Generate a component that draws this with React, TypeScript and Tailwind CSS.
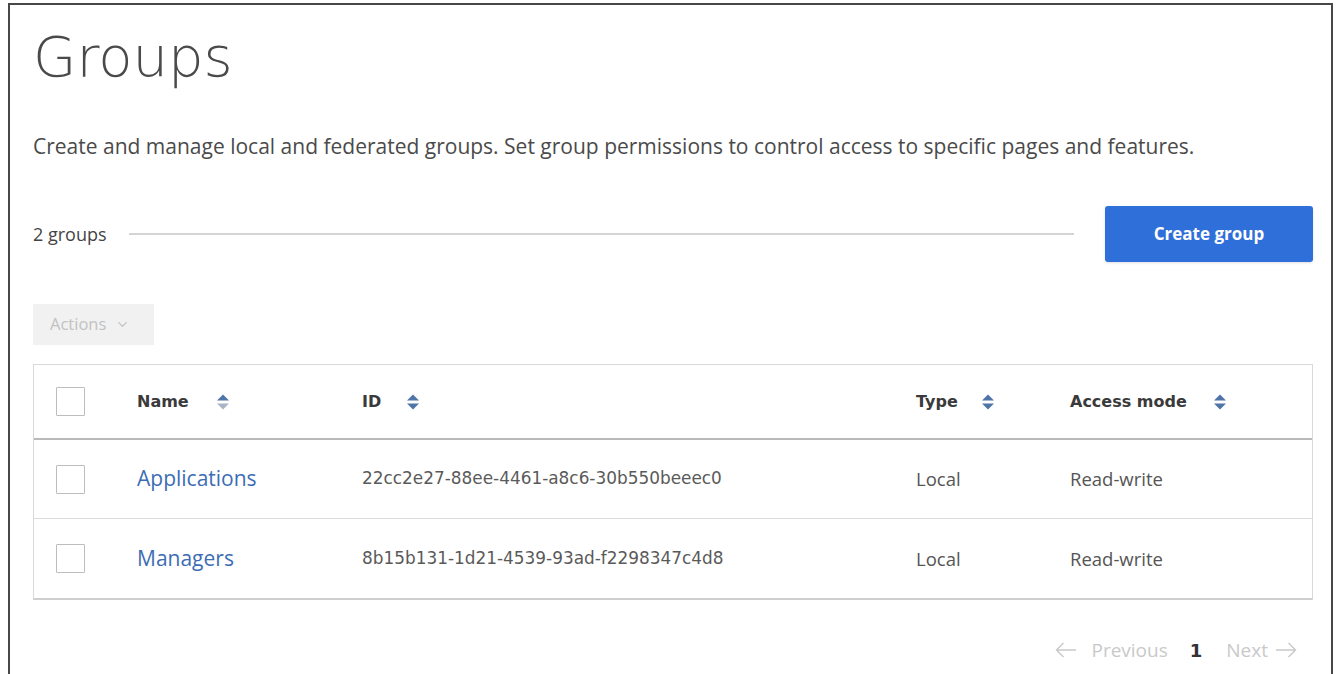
import { ChevronDown } from "lucide-react";

interface Group {
	name: string;
	id: string;
	type: string;
	access: string;
}

const groups: Group[] = [
	{ name: "Applications", id: "22cc2e27-88ee-4461-a8c6-30b550beeec0", type: "Local", access: "Read-write" },
	{ name: "Managers", id: "8b15b131-1d21-4539-93ad-f2298347c4d8", type: "Local", access: "Read-write" },
];

const cols = "grid grid-cols-[103px_225px_554px_154px_1fr] items-center";

const SortIcon = ({ faded }: { faded?: boolean }) => (
	<svg width="14" height="18" viewBox="0 0 14 18" className="shrink-0">
		<path d="M1 7.5 L7 1.5 L13 7.5 Z" fill="#4f74a8" />
		<path d="M1 10.5 L7 16.5 L13 10.5 Z" fill={faded ? "#a9b4c4" : "#4f74a8"} />
	</svg>
);

// long thin pager arrow, points left unless flipped
const PagerArrow = ({ flip }: { flip?: boolean }) => (
	<svg width="22" height="16" viewBox="0 0 22 16" className={flip ? "rotate-180" : ""}>
		<path d="M21 8 H1.5 M8.5 1 L1.5 8 L8.5 15" fill="none" stroke="currentColor" strokeWidth="1.4" />
	</svg>
);

const Checkbox = () => <div className="w-[29px] h-[29px] border border-[#bdbdbd] bg-white rounded-[1px]" />;

const HeaderCell = ({ label, gap, faded }: { label: string; gap: string; faded?: boolean }) => (
	<div className={`flex items-center ${gap}`}>
		<span className="font-['DejaVu_Sans',sans-serif] font-bold text-[16px] text-[#3a3a3a]">{label}</span>
		<SortIcon faded={faded} />
	</div>
);

const App = () => {
	return (
		<div className="min-h-screen bg-white pt-[3px] pl-[8px] pr-[4px] font-['Open_Sans',sans-serif]">
			<div className="min-h-[700px] border-t-2 border-x-2 border-[#474747] pl-[23px] pr-[18px]">
				<h1 className="mt-[22px] h-[59px] text-[56px] leading-[59px] font-['DejaVu_Sans',sans-serif] font-extralight text-[#4a4a4a]">
					Groups
				</h1>

				<p className="mt-[45px] text-[21px] leading-[30px] text-[#4a4a4a]">
					Create and manage local and federated groups. Set group permissions to control access to specific pages and
					features.
				</p>

				<div className="mt-[45px] h-[56px] flex items-center">
					<span className="text-[18px] text-[#444]">2 groups</span>
					<div className="flex-1 h-[2px] bg-[#d4d4d4] ml-[22px] mr-[31px]" />
					<button className="h-[56px] w-[208px] rounded-[3px] bg-[#2f6fd9] text-white font-bold text-[17px] shadow-sm">
						Create group
					</button>
				</div>

				<button className="mt-[42px] h-[41px] w-[121px] bg-[#f1f1f1] flex items-center gap-[9px] pl-[17px] text-[16.5px] text-[#c2c2c2]">
					Actions
					<ChevronDown size={15} strokeWidth={2} />
				</button>

				<div className="mt-[19px] border border-[#d9d9d9] border-b-2 border-b-[#cfcfcf]">
					<div className={`${cols} h-[75px] border-b-2 border-[#b9b9b9]`}>
						<div className="pl-[22px]">
							<Checkbox />
						</div>
						<HeaderCell label="Name" gap="gap-[27px]" faded />
						<HeaderCell label="ID" gap="gap-[25px]" />
						<HeaderCell label="Type" gap="gap-[23px]" />
						<HeaderCell label="Access mode" gap="gap-[26px]" />
					</div>
					{groups.map((g, i) => (
						<div
							key={g.id}
							className={`${cols} h-[79px] ${i < groups.length - 1 ? "border-b border-[#dcdcdc]" : ""}`}
						>
							<div className="pl-[22px]">
								<Checkbox />
							</div>
							<span className="text-[21px] text-[#3c6db4]">{g.name}</span>
							<span className="font-['DejaVu_Sans',sans-serif] text-[16.9px] text-[#5a5a5a]">{g.id}</span>
							<span className="text-[18.5px] text-[#555]">{g.type}</span>
							<span className="text-[18.5px] text-[#555]">{g.access}</span>
						</div>
					))}
				</div>

				<div className="mt-[35px] h-[30px] flex items-center justify-end pr-[16px] text-[19px] text-[#c9c9c9]">
					<PagerArrow />
					<span className="ml-[14px]">Previous</span>
					<span className="ml-[22px] font-['DejaVu_Sans',sans-serif] font-bold text-[#333] text-[18px]">1</span>
					<span className="ml-[24px]">Next</span>
					<span className="ml-[7px] flex">
						<PagerArrow flip />
					</span>
				</div>
			</div>
		</div>
	);
};

export default App;
